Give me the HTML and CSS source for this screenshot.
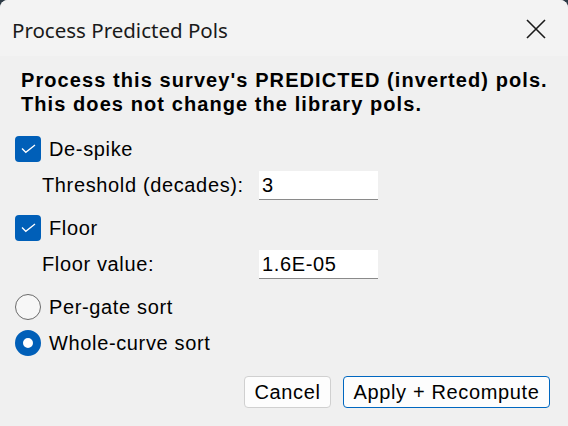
FILE: index.html
```html
<!DOCTYPE html>
<html>
<head>
<meta charset="utf-8">
<link rel="stylesheet" href="styles.css">
</head>
<body>
<div class="window">
  <div class="titlebar">
    <span class="title">Process Predicted Pols</span>
    <svg class="close" width="20" height="20" viewBox="0 0 20 20"><path d="M1 1 L19 19 M19 1 L1 19" stroke="#1a1a1a" stroke-width="1.6" fill="none"/></svg>
  </div>
  <div class="content">
    <p class="intro">Process this survey's PREDICTED (inverted) pols.<br>This does not change the library pols.</p>
    <div class="opt row-despike">
      <span class="check"><svg width="15" height="10" viewBox="0 0 15 10"><path d="M1 4.5 L4.8 8.3 L14 1" stroke="#fff" stroke-width="1.3" fill="none"/></svg></span>
      <span class="label">De-spike</span>
    </div>
    <div class="field row-threshold">
      <span class="flabel">Threshold (decades):</span>
      <span class="input">3</span>
    </div>
    <div class="opt row-floor">
      <span class="check"><svg width="15" height="10" viewBox="0 0 15 10"><path d="M1 4.5 L4.8 8.3 L14 1" stroke="#fff" stroke-width="1.3" fill="none"/></svg></span>
      <span class="label">Floor</span>
    </div>
    <div class="field row-floorval">
      <span class="flabel">Floor value:</span>
      <span class="input">1.6E-05</span>
    </div>
    <div class="opt row-pergate">
      <span class="radio"></span>
      <span class="label">Per-gate sort</span>
    </div>
    <div class="opt row-whole">
      <span class="radio on"></span>
      <span class="label">Whole-curve sort</span>
    </div>
    <div class="buttons">
      <span class="btn cancel">Cancel</span>
      <span class="btn apply">Apply + Recompute</span>
    </div>
  </div>
</div>
</body>
</html>
```
FILE: styles.css
```css
html, body {
  margin: 0;
  padding: 0;
  width: 568px;
  height: 426px;
  overflow: hidden;
  background: #2e3b47;
}
.window {
  width: 568px;
  height: 426px;
  background: #f0f0f0;
  border-radius: 8px 8px 0 0;
  overflow: hidden;
  font-family: "Liberation Sans", Arial, sans-serif;
  color: #000;
  display: flex;
  flex-direction: column;
}
.titlebar {
  height: 56px;
  flex: none;
  background: #f3f3f3;
  display: flex;
  align-items: center;
  justify-content: space-between;
  padding: 0 22px 0 12px;
}
.title {
  font-family: "Noto Sans", "Open Sans", sans-serif;
  font-size: 20.5px;
  color: #1a1a1a;
  margin-top: 3px;
}
.close {
  margin-top: 1px;
}
.content {
  display: flex;
  flex-direction: column;
  padding: 12px 18px 0 15px;
  font-size: 20px;
  letter-spacing: 0.64px;
}
.intro {
  margin: 0 0 0 6px;
  font-weight: bold;
  font-size: 20px;
  letter-spacing: 1.08px;
  line-height: 24px;
  white-space: nowrap;
}
.opt {
  display: flex;
  align-items: center;
  height: 26px;
}
.label {
  margin-left: 8px;
}
.check {
  width: 26px;
  height: 26px;
  box-sizing: border-box;
  background: #005fb8;
  border-radius: 4px;
  display: flex;
  align-items: center;
  justify-content: center;
}
.radio {
  width: 26px;
  height: 26px;
  box-sizing: border-box;
  border: 1.5px solid #6b6b6b;
  border-radius: 50%;
  background: #f7f7f7;
}
.radio.on {
  border: 8px solid #005fb8;
  background: #fff;
}
.field {
  display: flex;
  align-items: center;
  height: 29px;
  padding-left: 27px;
}
.flabel {
  width: 217px;
}
.input {
  width: 119px;
  height: 29px;
  box-sizing: border-box;
  background: #fff;
  border-bottom: 1px solid #8a8a8a;
  padding: 2px 0 0 3px;
  line-height: 24px;
}
.row-despike { margin-top: 20px; }
.row-threshold { margin-top: 9px; }
.row-floor { margin-top: 15px; }
.row-floorval { margin-top: 9px; }
.row-pergate { margin-top: 15px; }
.row-whole { margin-top: 10px; }
.buttons {
  margin-top: 20px;
  display: flex;
  justify-content: flex-end;
  gap: 12px;
}
.btn {
  height: 32px;
  box-sizing: border-box;
  background: #fdfdfd;
  border: 1px solid #d0d0d0;
  border-radius: 4px;
  display: flex;
  align-items: center;
  justify-content: center;
}
.cancel { width: 87px; }
.apply {
  width: 207px;
  border-color: #0067c0;
}
```
